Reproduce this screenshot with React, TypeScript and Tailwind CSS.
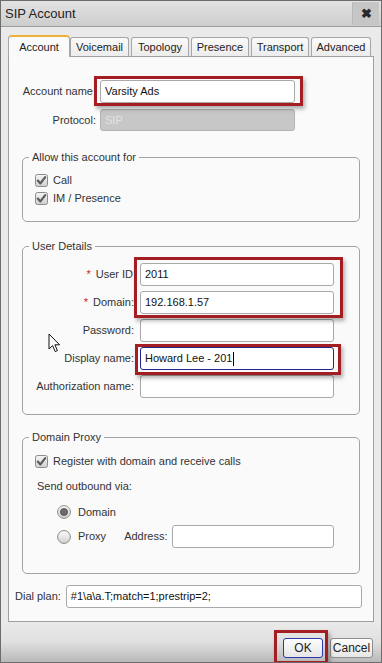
import type { ReactNode } from "react"

const Check = () => (
  <svg width="13" height="13" viewBox="0 0 13 13" className="shrink-0">
    <defs>
      <linearGradient id="cbg" x1="0" y1="0" x2="0" y2="1">
        <stop offset="0" stopColor="#f6f6f6" />
        <stop offset="1" stopColor="#cfcfcf" />
      </linearGradient>
    </defs>
    <rect x="0.5" y="0.5" width="12" height="12" rx="2" fill="url(#cbg)" stroke="#8c8c8c" />
    <path d="M2.8 6.6 L5.4 9.4 L10.2 3.2" fill="none" stroke="#5c5c5c" strokeWidth="2.2" strokeLinecap="round" strokeLinejoin="round" />
  </svg>
)

const Radio = ({ on }: { on?: boolean }) => (
  <svg width="14" height="14" viewBox="0 0 14 14" className="shrink-0">
    <defs>
      <linearGradient id="rbg" x1="0" y1="0" x2="0" y2="1">
        <stop offset="0" stopColor="#fbfbfb" />
        <stop offset="1" stopColor="#d2d2d2" />
      </linearGradient>
    </defs>
    <circle cx="7" cy="7" r="6.4" fill="url(#rbg)" stroke="#8a8a8a" />
    {on && <circle cx="7" cy="7" r="3.6" fill="#6b6b6b" stroke="#4e4e4e" strokeWidth="0.8" />}
  </svg>
)

const Field = ({ children, className = "" }: { children?: ReactNode; className?: string }) => (
  <div className={`h-[23px] flex items-center px-[4px] bg-white border border-[#a9a9a9] rounded-[3px] text-[11px] text-[#111] ${className}`}>
    {children}
  </div>
)

const Mark = ({ className }: { className: string }) => (
  <span className={`absolute border-[3px] border-[#a31d22] shadow-[2px_3px_4px_rgba(0,0,0,0.3)] pointer-events-none ${className}`} />
)

const Group = ({ title, className = "", children }: { title: string; className?: string; children: ReactNode }) => (
  <fieldset className={`ml-[13px] w-[338px] border border-[#a3a3a3] rounded-[5px] ${className}`}>
    <legend className="ml-[6px] px-[3px] leading-[13px] text-[11px] text-[#333]">{title}</legend>
    {children}
  </fieldset>
)

const tabs = [
  { name: "Voicemail", w: "w-[59px]" },
  { name: "Topology", w: "w-[58px]" },
  { name: "Presence", w: "w-[58px]" },
  { name: "Transport", w: "w-[58px]" },
  { name: "Advanced", w: "w-[60px]" },
]

export default function App() {
  return (
    <div className="relative w-[382px] h-[663px] flex flex-col overflow-hidden border border-[#6c6c6c] bg-[#eaeaea] font-['Liberation_Sans',Arial,sans-serif] text-[11px] text-[#333]">
      {/* Title bar */}
      <div className="h-[26px] shrink-0 flex items-center justify-between pl-[4px] pr-[2px] bg-linear-to-b from-[#e3e3e3] to-[#cdcdcd] border-b border-[#9c9c9c]">
        <span className="text-[13px] text-[#222]">SIP Account</span>
        <div className="w-[27px] h-[23px] flex items-center justify-center bg-[#c6c6c6] border-l border-[#b8b8b8] text-[13px] font-bold text-[#2a2a2a]">✖</div>
      </div>

      {/* Tabs */}
      <div className="mt-[8px] pl-[7px] h-[21px] flex items-end shrink-0">
        <div className="relative z-10 -mb-px h-[22px] w-[62px] flex items-center justify-center bg-[#fafafa] border-x border-[#a6a6a6] border-t-2 border-t-[#f0b03c] rounded-t-[4px] text-[#222]">
          Account
        </div>
        {tabs.map((t, i) => (
          <div
            key={t.name}
            className={`h-[19px] ${t.w} ${i > 0 ? "ml-[2px]" : ""} flex items-center justify-center bg-linear-to-b from-[#fafafa] to-[#ececec] border-x border-t border-[#a6a6a6] rounded-t-[3px] text-[#222]`}
          >
            {t.name}
          </div>
        ))}
      </div>

      {/* Panel */}
      <div className="ml-[7px] w-[366px] h-[566px] shrink-0 bg-[#fafafa] border border-[#a0a0a0] flex flex-col">
        <div className="mt-[23px] flex items-center">
          <span className="w-[84px] text-right">Account name</span>
          <div className="relative ml-[7px]">
            <Field className="w-[195px]">Varsity Ads</Field>
            <Mark className="-left-[6px] -right-[8px] -top-[4px] -bottom-[3px]" />
          </div>
        </div>
        <div className="mt-[6px] flex items-center">
          <span className="w-[87px] text-right">Protocol:</span>
          <div className="ml-[4px] w-[195px] h-[22px] flex items-center px-[4px] bg-[#c7c7c7] border border-[#b3b3b3] rounded-[3px] text-[#e2e2e2]">SIP</div>
        </div>

        <Group title="Allow this account for" className="mt-[20px]">
          <div className="pl-[12px] pt-[7px] pb-[14px]">
            <div className="h-[18px] flex items-center gap-[5px]"><Check /><span>Call</span></div>
            <div className="h-[18px] flex items-center gap-[5px]"><Check /><span>IM / Presence</span></div>
          </div>
        </Group>

        <Group title="User Details" className="mt-[18px]">
          <div className="pt-[10px] pb-[16px] flex flex-col gap-[5px]">
            <div className="flex items-center">
              <span className="w-[110px] text-right"><span className="text-[#d42020] mr-[5px]">*</span>User ID</span>
              <div className="relative ml-[7px]">
                <Field className="w-[194px]">2011</Field>
                <Mark className="-left-[6px] -right-[9px] -top-[6px] -bottom-[32px]" />
              </div>
            </div>
            <div className="flex items-center">
              <span className="w-[111px] text-right"><span className="text-[#d42020] mr-[5px]">*</span>Domain:</span>
              <Field className="ml-[6px] w-[194px]">192.168.1.57</Field>
            </div>
            <div className="flex items-center">
              <span className="w-[111px] text-right">Password:</span>
              <Field className="ml-[6px] w-[194px]" />
            </div>
            <div className="flex items-center">
              <span className="w-[111px] text-right">Display name:</span>
              <div className="relative ml-[6px]">
                <Field className="w-[194px] !border-[#23238f]">
                  Howard Lee - 201<span className="ml-px w-px h-[14px] bg-black" />
                </Field>
                <Mark className="-left-[5px] -right-[7px] -top-[3px] -bottom-[5px]" />
              </div>
            </div>
            <div className="flex items-center">
              <span className="w-[111px] text-right">Authorization name:</span>
              <Field className="ml-[6px] w-[194px]" />
            </div>
          </div>
        </Group>

        <Group title="Domain Proxy" className="mt-[16px]">
          <div className="pl-[12px] pt-[8px] pb-[25px]">
            <div className="h-[18px] flex items-center gap-[5px]"><Check /><span>Register with domain and receive calls</span></div>
            <div className="mt-[8px] ml-[2px] h-[16px] flex items-center">Send outbound via:</div>
            <div className="mt-[9px] ml-[22px] h-[18px] flex items-center gap-[7px]"><Radio on /><span>Domain</span></div>
            <div className="mt-[4px] ml-[22px] h-[23px] flex items-center">
              <Radio />
              <span className="ml-[7px]">Proxy</span>
              <span className="ml-[18px]">Address:</span>
              <Field className="ml-[4px] w-[162px]" />
            </div>
          </div>
        </Group>

        <div className="mt-[11px] pl-[6px] flex items-center">
          <span>Dial plan:</span>
          <Field className="ml-[5px] w-[296px]">#1\a\a.T;match=1;prestrip=2;</Field>
        </div>
      </div>

      {/* Footer */}
      <div className="flex-1 bg-linear-to-b from-[#eaeaea] via-[#e0e0e0] to-[#b9b9b9] pt-[16px] pr-[8px] flex justify-end items-start">
        <div className="relative">
          <button className="w-[40px] h-[20px] bg-linear-to-b from-[#fdfdfd] to-[#e6e6e6] border border-[#2e35b0] rounded-[3px] text-[12px] text-[#222]">OK</button>
          <Mark className="-left-[9px] -right-[5px] -top-[8px] -bottom-[6px]" />
        </div>
        <button className="ml-[7px] w-[43px] h-[20px] bg-linear-to-b from-[#fdfdfd] to-[#e6e6e6] border border-[#8e8e8e] rounded-[3px] text-[12px] text-[#222]">Cancel</button>
      </div>

      {/* mouse pointer */}
      <svg width="13" height="21" viewBox="0 0 13 21" className="absolute left-[47px] top-[332px]">
        <path d="M1 1 L1 16 L4.6 12.6 L7.2 18.6 L9.4 17.6 L6.9 11.8 L11.6 11.8 Z" fill="#fff" stroke="#111" strokeWidth="1" strokeLinejoin="miter" />
      </svg>
    </div>
  )
}
